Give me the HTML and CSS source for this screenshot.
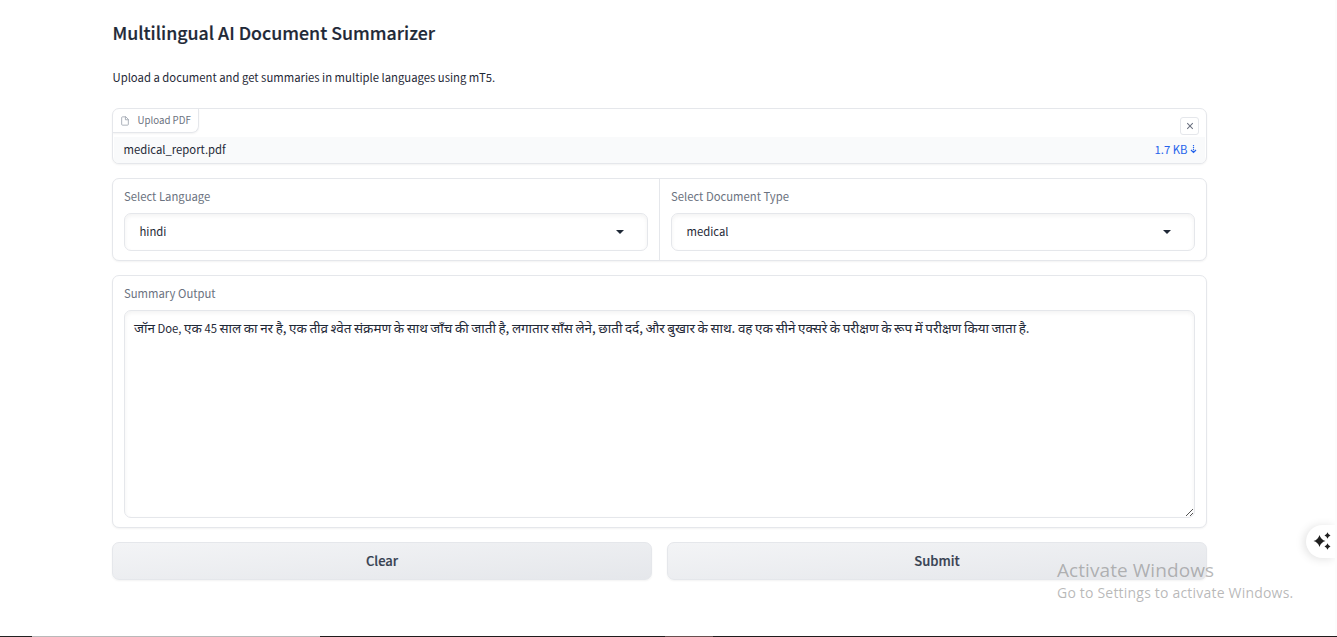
FILE: index.html
```html
<!DOCTYPE html>
<html lang="en">
<head>
<meta charset="utf-8">
<title>Multilingual AI Document Summarizer</title>
<link rel="stylesheet" href="styles.css">
</head>
<body>
<main class="app">
  <h1 class="title">Multilingual AI Document Summarizer</h1>
  <p class="intro">Upload a document and get summaries in multiple languages using mT5.</p>

  <section class="block upload">
    <div class="upload-head">
      <div class="upload-label">
        <svg class="file-icon" viewBox="0 0 24 24" fill="none" stroke="currentColor" stroke-width="2" stroke-linecap="round" stroke-linejoin="round"><path d="M13 2H6a2 2 0 0 0-2 2v16a2 2 0 0 0 2 2h12a2 2 0 0 0 2-2V9z"/><path d="M13 2v7h7"/></svg>
        <span class="upload-text">Upload PDF</span>
      </div>
      <button class="close" aria-label="Clear file"><svg viewBox="0 0 10 10" width="8" height="8" stroke="currentColor" stroke-width="1.3"><path d="M1.500 1.500 8.500 8.500M8.500 1.500 1.500 8.500"/></svg></button>
    </div>
    <div class="file-row">
      <span class="file-name">medical_report.pdf</span>
      <span class="file-size"><span class="size-text">1.7 KB</span><svg width="7" height="10" viewBox="0 0 7 10" fill="none" stroke="#2563eb"><path d="M3.500 1v7" stroke-width="1.200" stroke-dasharray="1.300 .7"/><path d="M1 6 3.500 8.500 6 6" stroke-width="1.200"/></svg></span>
    </div>
  </section>

  <section class="block fields">
    <div class="field">
      <span class="label label-lang">Select Language</span>
      <div class="select"><span class="value">hindi</span><svg class="caret" width="8" height="4" viewBox="0 0 8 4"><path d="M0 0h8L4 4z" fill="currentColor"/></svg></div>
    </div>
    <div class="field">
      <span class="label label-type">Select Document Type</span>
      <div class="select"><span class="value">medical</span><svg class="caret" width="8" height="4" viewBox="0 0 8 4"><path d="M0 0h8L4 4z" fill="currentColor"/></svg></div>
    </div>
  </section>

  <section class="block summary">
    <span class="label label-summary">Summary Output</span>
    <div class="output">
      <p class="output-text" lang="hi">जॉन <span class="latin">Doe,</span> एक <span class="latin">45</span> साल का नर है, एक तीव्र श्वेत संक्रमण के साथ जाँच की जाती है, लगातार साँस लेने, छाती दर्द, और बुखार के साथ. वह एक सीने एक्सरे के परीक्षण के रूप में परीक्षण किया जाता है.</p>
      <svg class="grip" width="9" height="9" viewBox="0 0 9 9" fill="none" stroke="#555"><path d="M1 8 8 1M5 8l3-3"/></svg>
    </div>
  </section>

  <div class="actions">
    <button class="btn">Clear</button>
    <button class="btn">Submit</button>
  </div>
</main>

<div class="watermark">
  <div class="wm-title">Activate Windows</div>
  <div class="wm-sub">Go to Settings to activate Windows.</div>
</div>
<div class="assistant"><svg width="18" height="18" viewBox="0 0 18 18" fill="#1f1f1f"><path d="M6.500 3Q7.800 7.700 12.500 9 7.800 10.300 6.500 15 5.200 10.300.5 9 5.200 7.700 6.500 3zM14.500.3q.7 2.500 3 3.200-2.300.7-3 3.200-.7-2.500-3-3.200 2.300-.7 3-3.200zM14.500 11.300q.7 2.500 3 3.200-2.300.7-3 3.200-.7-2.500-3-3.200 2.300-.7 3-3.200z"/></svg></div>
<div class="page-edge"></div>
<div class="taskbar-edge"></div>
</body>
</html>
```

FILE: styles.css
```css
* { box-sizing: border-box; }
body {
  margin: 0;
  height: 637px;
  overflow: hidden;
  position: relative;
  background: #fff;
  color: #1f2937;
  font-family: "Noto Sans CJK SC", "Noto Sans", sans-serif;
  font-size: 11.3px;
  line-height: 18px;
}
p { margin: 0; }
button { font: inherit; margin: 0; padding: 0; }
svg { display: block; flex: none; }
.app { width: 1095px; margin-left: 112px; padding-top: 19px; }
.title { margin: 0 0 0 .5px; font-size: 17.8px; line-height: 26px; font-weight: 500; white-space: nowrap; -webkit-text-stroke: .2px #1f2937; }
.intro { margin: 23px 0 21px .5px; line-height: 19px; white-space: nowrap; }
.block {
  border: 1px solid #e5e7eb;
  border-radius: 7px;
  background: #fff;
  box-shadow: 0 1px 2px rgba(0,0,0,.05);
  margin-bottom: 14px;
}
.upload { height: 56px; overflow: hidden; }
.upload-head { display: flex; justify-content: space-between; height: 28px; }
.upload-label {
  display: flex; align-items: center; gap: 8px;
  width: 86px; height: 24px; padding-left: 6.5px;
  border: solid #e5e7eb; border-width: 0 1px 1px 0;
  border-radius: 0 0 7px 0;
  box-shadow: 0 1px 2px rgba(0,0,0,.05);
  color: #6b7280; font-size: 9.7px; white-space: nowrap;
}
.upload-text { margin-bottom: 1px; }
.file-icon { width: 10px; height: 10px; color: #9ca3af; }
.close {
  display: flex; align-items: center; justify-content: center;
  width: 19px; height: 18px; margin: 8px 7px 0 0;
  border: 1px solid #e5e7eb; border-radius: 3px;
  background: #fff; color: #6b7280;
}
.file-row {
  display: flex; align-items: center; justify-content: space-between;
  height: 26px; margin: 0 1px; padding: 0 8.5px 2px 9.5px;
  background: #f9fafb;
}
.file-size { display: flex; align-items: center; gap: 2px; color: #2563eb; }
.fields { display: flex; height: 83px; }
.field { flex: 1; padding: 8px 11px; }
.field + .field { border-left: 1px solid #e5e7eb; }
.label { display: block; width: max-content; color: #6b7280; line-height: 18px; }
.select {
  display: flex; align-items: center; justify-content: space-between;
  height: 38px; margin-top: 8px; padding: 0 23px 0 15px;
  border: 1px solid #e5e7eb; border-radius: 7px;
  box-shadow: inset 0 2px 4px rgba(0,0,0,.05);
}
.value { margin: 0 0 2px -.5px; }
.summary { height: 253px; padding: 8px 11px; }
.output {
  position: relative; height: 208px; margin-top: 8px; padding: 7px 9px;
  border: 1px solid #e5e7eb; border-radius: 7px;
  box-shadow: inset 0 2px 4px rgba(0,0,0,.05);
}
.output-text { width: max-content; white-space: nowrap; font-size: 13.45px; line-height: 19px; word-spacing: -.44px; }
.latin { font-size: 11.3px; }
.grip { position: absolute; right: 0; bottom: 0; }
.actions { display: flex; gap: 15px; }
.btn {
  flex: 1; height: 38px; padding-bottom: 1px;
  border: 1px solid #e5e7eb; border-radius: 7px;
  background: linear-gradient(to bottom right, #f3f4f6, #e5e7eb);
  box-shadow: 0 1px 2px rgba(0,0,0,.05);
  color: #374151; font-size: 13px; font-weight: 500;
  -webkit-text-stroke: .2px #374151;
}
.watermark {
  position: absolute; left: 1057px; top: 558px;
  color: rgba(125,125,125,.55); font-family: "Open Sans", sans-serif; white-space: nowrap;
}
.wm-title { font-size: 19px; line-height: 25px; letter-spacing: .07px; }
.wm-sub { font-size: 14px; line-height: 20px; letter-spacing: .2px; }
.assistant {
  position: absolute; left: 1306px; top: 525px; width: 29px; height: 33px;
  display: flex; align-items: center; padding: 0 0 1px 7px;
  border-radius: 17px 0 0 17px; background: #fff;
  box-shadow: -2px 1px 10px rgba(0,0,0,.12);
}
.page-edge { position: absolute; right: 0; top: 0; width: 2px; height: 636px; background: #fcfcfc; }
.taskbar-edge {
  position: absolute; left: 0; bottom: 0; width: 100%; height: 1px;
  background: linear-gradient(to right, #222 32px, #b9b9b9 32px 320px, #201c1c 320px 665px, #675050 665px 713px, #201c1c 713px);
}
```
